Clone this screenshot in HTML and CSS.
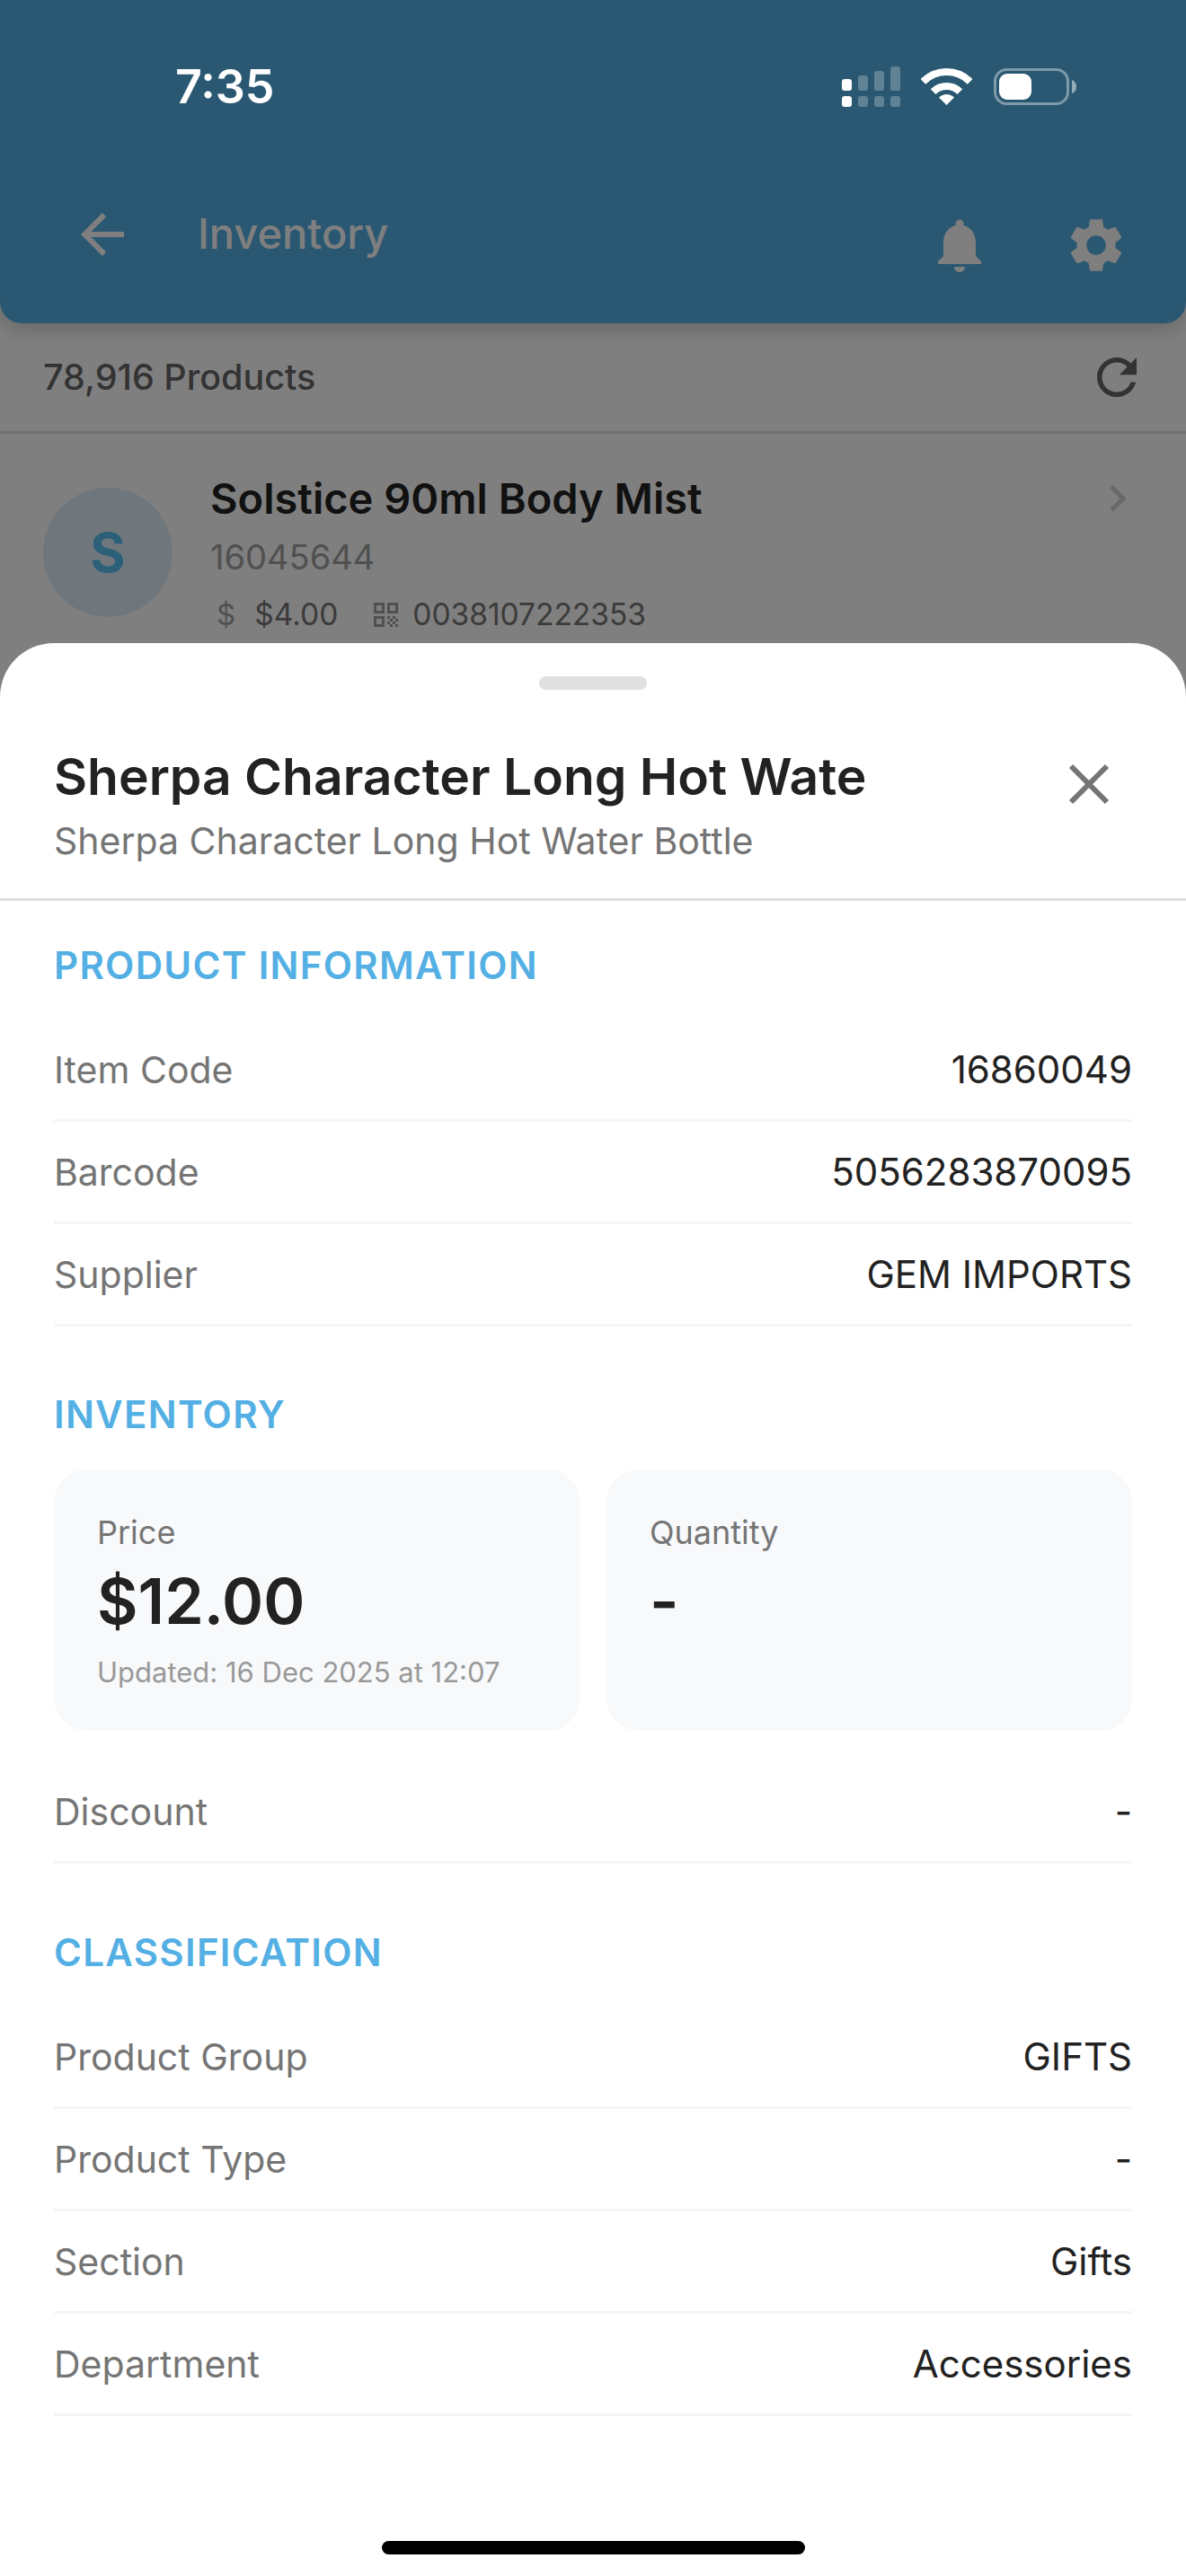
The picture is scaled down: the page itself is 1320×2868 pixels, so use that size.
FILE: index.html
```html
<!DOCTYPE html>
<html lang="en">
<head>
<meta charset="utf-8">
<title>Inventory</title>
<link rel="stylesheet" href="styles.css">
</head>
<body>
<div class="screen">
  <header class="app-header">
    <div class="toolbar">
      <svg class="icon back" viewBox="0 0 24 24"><path d="M20 11H7.83l5.59-5.59L12 4l-8 8 8 8 1.41-1.41L7.83 13H20v-2z"/></svg>
      <span class="toolbar-title">Inventory</span>
      <svg class="icon bell" viewBox="0 0 24 24"><path d="M12 22c1.1 0 2-.9 2-2h-4c0 1.1.89 2 2 2zm6-6v-5c0-3.07-1.64-5.64-4.5-6.32V4c0-.83-.67-1.5-1.5-1.5s-1.5.67-1.5 1.5v.68C7.63 5.36 6 7.92 6 11v5l-2 2v1h16v-1l-2-2z"/></svg>
      <svg class="icon gear" viewBox="0 0 24 24"><path d="M19.14 12.94c.04-.3.06-.61.06-.94 0-.32-.02-.64-.07-.94l2.03-1.58c.18-.14.23-.41.12-.61l-1.92-3.32c-.12-.22-.37-.29-.59-.22l-2.39.96c-.5-.38-1.03-.7-1.62-.94l-.36-2.54c-.04-.24-.24-.41-.48-.41h-3.84c-.24 0-.43.17-.47.41l-.36 2.54c-.59.24-1.13.57-1.62.94l-2.39-.96c-.22-.08-.47 0-.59.22L2.74 8.87c-.12.21-.08.47.12.61l2.03 1.58c-.05.3-.09.63-.09.94s.02.64.07.94l-2.03 1.58c-.18.14-.23.41-.12.61l1.92 3.32c.12.22.37.29.59.22l2.39-.96c.5.38 1.03.7 1.62.94l.36 2.54c.05.24.24.41.48.41h3.84c.24 0 .44-.17.47-.41l.36-2.54c.59-.24 1.13-.56 1.62-.94l2.39.96c.22.08.47 0 .59-.22l1.92-3.32c.12-.22.07-.47-.12-.61l-2.01-1.58zM12 15.6c-1.98 0-3.6-1.62-3.6-3.6s1.62-3.6 3.6-3.6 3.6 1.62 3.6 3.6-1.62 3.6-3.6 3.6z"/></svg>
    </div>
  </header>

  <div class="count-bar">
    <span class="count">78,916 Products</span>
    <svg class="refresh" viewBox="0 0 24 24"><path d="M17.65 6.35C16.2 4.9 14.21 4 12 4c-4.42 0-7.99 3.58-7.99 8s3.57 8 7.99 8c3.73 0 6.84-2.55 7.73-6h-2.08c-.82 2.33-3.04 4-5.65 4-3.31 0-6-2.69-6-6s2.69-6 6-6c1.66 0 3.14.69 4.22 1.78L13 11h7V4l-2.35 2.35z"/></svg>
  </div>

  <article class="product">
    <div class="avatar">S</div>
    <div class="product-body">
      <div class="product-name">Solstice 90ml Body Mist</div>
      <div class="product-code">16045644</div>
      <div class="product-meta">
        <span class="dollar">$</span>
        <span>$4.00</span>
        <svg class="qr" viewBox="0 0 27 27"><path d="M0 0h12v12H0zM3 3v6h6V3zM15 0h12v12H15zM18 3v6h6V3zM0 15h12v12H0zM3 18v6h6v-6z" fill-rule="evenodd"/><path d="M15 15h3v3h-3zM21 15h3v3h-3zM18 18h3v3h-3zM24 18h3v3h-3zM15 21h3v3h-3zM21 21h3v3h-3zM18 24h3v3h-3zM24 24h3v3h-3z"/></svg>
        <span>0038107222353</span>
      </div>
    </div>
    <svg class="chevron" viewBox="0 0 18 30"><path d="M2 2l13 13L2 28" fill="none" stroke-width="5"/></svg>
  </article>

  <div class="scrim"></div>

  <div class="status-bar">
    <span class="time">7:35</span>
    <svg class="signal" viewBox="0 0 65 45">
      <rect class="on" x="0" y="14" width="11" height="13" rx="3"/>
      <rect class="off" x="18" y="10" width="11" height="17" rx="3"/>
      <rect class="off" x="36" y="5" width="11" height="22" rx="3"/>
      <rect class="off" x="54" y="0" width="11" height="27" rx="3"/>
      <rect class="on" x="0" y="33" width="11" height="12" rx="3"/>
      <rect class="off" x="18" y="33" width="11" height="12" rx="3"/>
      <rect class="off" x="36" y="33" width="11" height="12" rx="3"/>
      <rect class="off" x="54" y="33" width="11" height="12" rx="3"/>
    </svg>
    <svg class="wifi" viewBox="0 0 57 41">
      <path d="M2.34 14.84A37 37 0 0 1 54.66 14.84" fill="none" stroke="#fff" stroke-width="8"/>
      <path d="M13.65 26.15A21 21 0 0 1 43.35 26.15" fill="none" stroke="#fff" stroke-width="8"/>
      <path d="M28.5 41L20.01 32.51A12 12 0 0 1 36.99 32.51Z" fill="#fff"/>
    </svg>
    <svg class="battery" viewBox="0 0 92 41">
      <rect class="batt-case" x="1.5" y="1.5" width="81" height="38" rx="13"/>
      <rect x="6" y="6" width="36" height="29" rx="9" fill="#fff"/>
      <path class="batt-tip" d="M87 13c3 1 5 4 5 7.500s-2 6.500-5 7.500z"/>
    </svg>
  </div>

  <section class="sheet">
    <div class="handle"></div>
    <div class="sheet-head">
      <div class="sheet-titles">
        <h1 class="sheet-title">Sherpa Character Long Hot Wate</h1>
        <p class="sheet-sub">Sherpa Character Long Hot Water Bottle</p>
      </div>
      <svg class="close" viewBox="0 0 80 80"><path d="M20 20L60 60M60 20L20 60" fill="none" stroke-width="6"/></svg>
    </div>
    <div class="sheet-body">
      <h2 class="section-title first">PRODUCT INFORMATION</h2>
      <div class="row"><span class="row-label">Item Code</span><span class="row-value">16860049</span></div>
      <div class="row"><span class="row-label">Barcode</span><span class="row-value">5056283870095</span></div>
      <div class="row"><span class="row-label">Supplier</span><span class="row-value">GEM IMPORTS</span></div>

      <h2 class="section-title">INVENTORY</h2>
      <div class="cards">
        <div class="card">
          <div class="card-label">Price</div>
          <div class="card-value">$12.00</div>
          <div class="card-note">Updated: 16 Dec 2025 at 12:07</div>
        </div>
        <div class="card">
          <div class="card-label">Quantity</div>
          <div class="card-value">-</div>
        </div>
      </div>
      <div class="row"><span class="row-label">Discount</span><span class="row-value">-</span></div>

      <h2 class="section-title after-cards">CLASSIFICATION</h2>
      <div class="row"><span class="row-label">Product Group</span><span class="row-value">GIFTS</span></div>
      <div class="row"><span class="row-label">Product Type</span><span class="row-value">-</span></div>
      <div class="row"><span class="row-label">Section</span><span class="row-value">Gifts</span></div>
      <div class="row"><span class="row-label">Department</span><span class="row-value">Accessories</span></div>
    </div>
    <div class="home-indicator"></div>
  </section>
</div>
</body>
</html>
```

FILE: styles.css
```css
* { box-sizing: border-box; }
html, body { margin: 0; padding: 0; }
body { background: #fff; font-family: Inter, "Noto Sans", sans-serif; color: #222; }

.screen { position: relative; width: 1320px; height: 2868px; overflow: hidden; background: #fff; }

/* App behind the sheet */
.app-header {
  height: 360px;
  padding: 225px 66px 0 78px;
  background: #54b0e4;
  border-radius: 0 0 24px 24px;
  box-shadow: 0 6px 24px rgba(0, 0, 0, .2);
}
.toolbar { display: flex; align-items: flex-start; }
.icon { width: 72px; height: 72px; fill: #fff; flex: none; }
.toolbar-title { margin-left: 70px; font-size: 47px; line-height: 70px; font-weight: 500; color: #fff; flex: 1; }
.bell { margin-top: 12px; margin-right: 2px; }
.gear { margin-top: 12px; margin-left: 78px; margin-right: -2px; }

.count-bar {
  height: 123px;
  padding: 0 44px 0 48px;
  display: flex;
  align-items: center;
  justify-content: space-between;
  border-bottom: 3px solid #e0e0e0;
}
.count { font-size: 39.5px; font-weight: 500; color: #666; }
.refresh { width: 66px; height: 66px; fill: #666; }

.product { display: flex; align-items: flex-start; padding: 42px 48px 0 48px; }
.avatar {
  width: 144px; height: 144px; margin-top: 18px;
  border-radius: 50%;
  background: #dfeffa;
  color: #56c0f0;
  font-size: 60px; font-weight: 700; line-height: 144px; text-align: center;
  flex: none;
}
.product-body { margin-left: 42px; flex: 1; }
.product-name { font-size: 47px; line-height: 60px; font-weight: 600; color: #222; }
.product-code { margin-top: 11px; font-size: 38px; line-height: 48px; color: #a0a0a0; }
.product-meta { margin-top: 18px; display: flex; align-items: center; font-size: 33.500px; line-height: 44px; color: #777; gap: 21px; padding-left: 7px; }
.dollar { font-size: 33px; color: #a0a0a0; }
.qr { width: 27px; height: 27px; fill: #a0a0a0; margin-left: 19px; margin-right: -5px; }
.chevron { width: 18px; height: 30px; stroke: #d0d0d0; margin-top: 15px; margin-right: 19px; }

.scrim { position: absolute; inset: 0; background: rgba(0, 0, 0, .5); }

/* Status bar sits over the scrim */
.status-bar { position: absolute; left: 0; top: 0; right: 0; height: 120px; }
.time { position: absolute; left: 195px; top: 66px; font-size: 52px; line-height: 62px; font-weight: 600; color: #fff; }
.signal { position: absolute; left: 937px; top: 74px; width: 65px; height: 45px; }
.on { fill: #fff; }
.off { fill: rgba(255, 255, 255, .25); }
.wifi { position: absolute; left: 1025px; top: 76px; width: 57px; height: 41px; }
.battery { position: absolute; left: 1106px; top: 76px; width: 92px; height: 41px; }
.batt-case { fill: none; stroke: rgba(255, 255, 255, .4); stroke-width: 3; }
.batt-tip { fill: rgba(255, 255, 255, .5); }

/* Bottom sheet */
.sheet {
  position: absolute; left: 0; right: 0; top: 716px; bottom: 0;
  background: #fff;
  border-radius: 60px 60px 0 0;
}
.handle { width: 120px; height: 15px; margin: 37px auto 0; border-radius: 8px; background: #e0e0e0; }
.sheet-head {
  display: flex; justify-content: space-between; align-items: flex-start;
  padding: 61px 60px 37px;
  border-bottom: 3px solid #e0e0e0;
  height: 235px;
}
.sheet-title { margin: 0; font-size: 57px; line-height: 72px; font-weight: 600; color: #222; }
.sheet-sub { margin: 8px 0 0; font-size: 41px; line-height: 54px; color: #757575; }
.close { width: 80px; height: 80px; stroke: #757575; margin: 4px 8px 0 0; }

.sheet-body { padding: 0 60px; }
.section-title { margin: 71px 0 33px; font-size: 42px; line-height: 54px; font-weight: 600; letter-spacing: 1.3px; color: #54b0e4; }
.section-title.first { margin-top: 45px; }
.section-title.after-cards { margin-top: 72px; }

.row { display: flex; justify-content: space-between; align-items: center; height: 114px; border-bottom: 3px solid #f5f5f5; font-size: 41px; }
.row-label { color: #757575; }
.row-value { font-size: 42px; font-weight: 400; color: #222; }

.cards { display: flex; gap: 30px; margin-top: 34px; margin-bottom: 34px; }
.card { flex: 1; height: 291px; padding: 46px 48px 0; border-radius: 36px; background: #f8f9fb; }
.card-label { font-size: 36px; line-height: 48px; color: #757575; }
.card-value { margin-top: 13px; font-size: 70px; line-height: 80px; font-weight: 600; color: #222; }
.card-note { margin-top: 19px; font-size: 31px; line-height: 40px; color: #999; }

.home-indicator { position: absolute; left: 425px; bottom: 24px; width: 471px; height: 15px; border-radius: 8px; background: #000; }
```
